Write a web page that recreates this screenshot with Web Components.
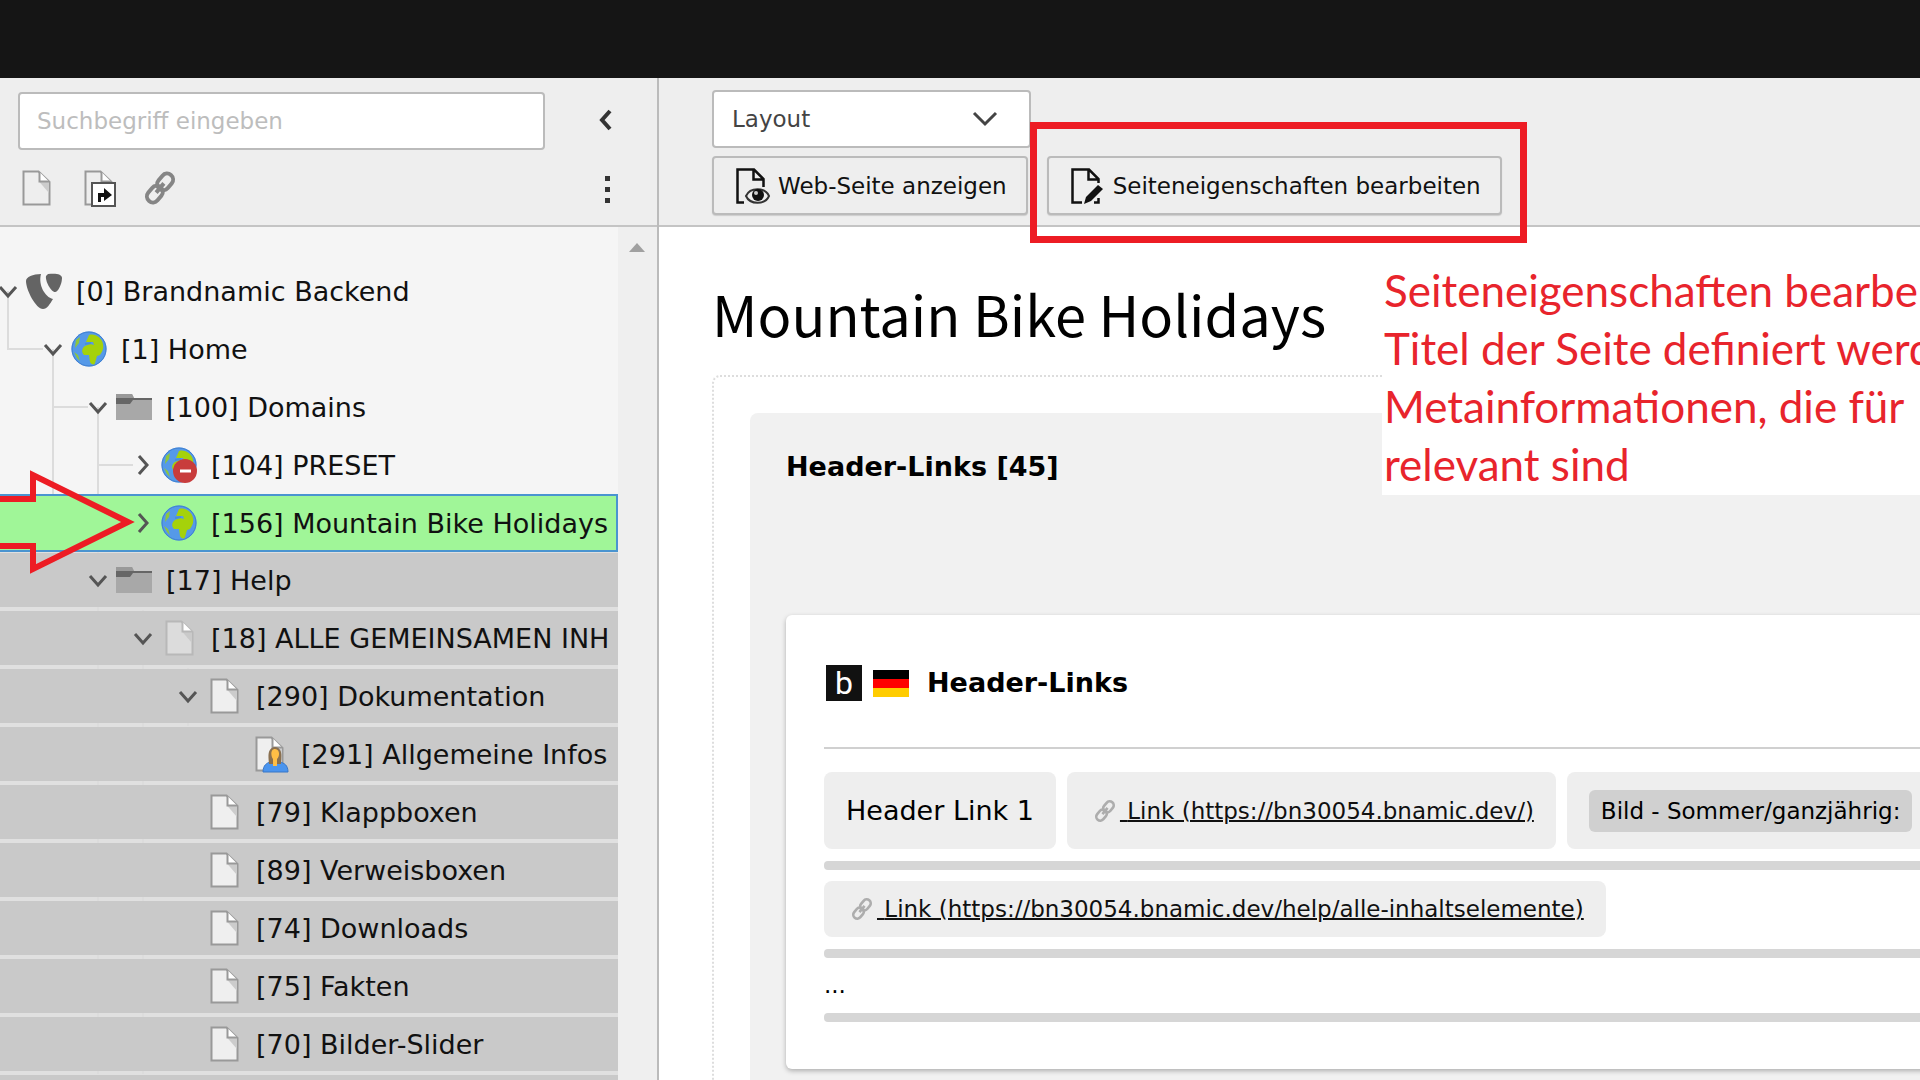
<!DOCTYPE html>
<html lang="de">
<head>
<meta charset="utf-8">
<title>Brandnamic Backend</title>
<style>
  html, body { margin: 0; height: 100%; }
  body { overflow: hidden; font-family: "DejaVu Sans", Verdana, sans-serif; font-size: 27px; color: #111; background: #fff; }
</style>
</head>
<body>
<backend-app></backend-app>
<script>
const page = (fill, stroke, fold) => `<path d="M5.500 1.500H20.500L31.500 12V34.500H5.500Z" fill="${fill}" stroke="${stroke}" stroke-width="2"/><path d="M21 11.500L31 23V12Z" fill="${fold}"/><path d="M21.500 2V11.500H31" fill="#fff" stroke="${stroke}" stroke-width="2"/>`;
const globe = `<circle cx="18" cy="18" r="17.500" fill="#5599e8"/><circle cx="18" cy="18" r="17" fill="none" stroke="#3f7fd0" stroke-width="1"/><path d="M18 4C24 2 31 7 32 13C33 18 31 21 29 24L26 25L24 32C23 35 20 33 19 31L18 24H13C10 21 11 17 14 15L19 13L23 14L22 11H15Z" fill="#a5d20a"/><path d="M5 9L9 6L8 12L4 17ZM3 21L7 24L9 30L6 27Z" fill="#8fc63c"/><path d="M14 13L20 12" stroke="#4a8fd8" stroke-width="2"/>`;
const chain = `<g fill="none" stroke-width="4" transform="rotate(-50 18 18)"><rect x="1" y="12" width="18" height="12" rx="6"/><rect x="17" y="12" width="18" height="12" rx="6"/><path d="M12 18H24"/></g>`;
const ICONS = {
  typo3: `<g fill="#646464"><path d="M15 1C12 12 19 24 27 26C24 31 21 36 17 36C10 36 0 17 0 8C0 4 7 1 15 1Z"/><path d="M22 1C30 0 36 1 36 5C36 11 32 19 29 19C25 19 19 8 20 3Z"/></g>`,
  globe,
  globeoff: globe + `<circle cx="24" cy="24" r="12" fill="#c83c3c"/><path d="M19 24H30" stroke="#fff" stroke-width="3"/>`,
  folder: `<path d="M0 5H16L18 9H36V31H0Z" fill="#a8a8a8"/><path d="M0 5H16L18 9H0Z" fill="#999"/><path d="M0 9H36V11H17L14 15H0Z" fill="#666"/>`,
  page: page("#efefef", "#999", "#ccc"),
  pagepale: page("#dcdcdc", "#b8b8b8", "#cacaca"),
  pageuser: page("#efefef", "#999", "#ccc") + `<path d="M12 36C12 29 16 27 19 26H29C33 27 37 29 37 36Z" fill="#4a94ee" stroke="#3776c8"/><path d="M24 11C15 12 18 23 18 28H30C30 23 33 12 24 11Z" fill="#8a7050"/><path d="M24 13C19 13 20 21 22 23V30H26V23C29 20 29 13 24 13Z" fill="#ffbe46"/>`,
  pagenew: page("#eee", "#999", "#ccc"),
  shortcut: page("#eee", "#999", "#ccc") + `<rect x="12" y="13" width="23" height="23" fill="#fff" stroke="#555" stroke-width="2"/><path d="M18 32V23H24V18L32 25L24 31V27H21V32Z" fill="#111"/>`,
  chain: `<g stroke="#858585">${chain}</g>`,
  chainpale: `<g stroke="#adadad">${chain}</g>`,
  view: `<path d="M12 34.500H5.500V1.500H22L31.500 11V19M21.500 2V11.500H31" fill="none" stroke="#111" stroke-width="2.500"/><path d="M14 28C18 19 33 19 37 28C33 37 18 37 14 28Z" fill="#eee" stroke="#333" stroke-width="2"/><circle cx="26" cy="27" r="6" fill="#111"/><circle cx="24" cy="25" r="2" fill="#ccc"/>`,
  edit: `<path d="M15 34.500H5.500V1.500H22L31.500 11V15M21.500 2V11.500H31M27 34.500H31.500V30" fill="none" stroke="#111" stroke-width="2.500"/><path d="M17 36L19 29L31 17L36 21L24 33Z" fill="#111"/>`
};

class Base extends HTMLElement {
  connectedCallback() {
    if (!this.shadowRoot) this.attachShadow({ mode: "open" }).innerHTML = this.render();
  }
}
const define = (name, render) => customElements.define(name, class extends Base { render() { return render(this); } });

define("ui-icon", el => `<style>:host{display:block;flex:none;width:36px;height:36px;white-space:normal}svg{display:block;width:100%;height:100%;overflow:visible}</style><svg viewBox="0 0 36 36" aria-hidden="true">${ICONS[el.getAttribute("name")]}</svg>`);

define("tree-row", el => {
  const level = +el.getAttribute("level");
  const state = el.getAttribute("state") || "";
  const open = el.getAttribute("toggle");
  const layers = [];
  for (const g of (el.getAttribute("guides") || "").split(" ").filter(Boolean)) {
    const [l, part] = g.split(":");
    const x = 7 + 45 * l;
    if (part === "end" || part === "tee") layers.push(`linear-gradient(#dcdcdc,#dcdcdc) ${x}px 28px/36px 2px no-repeat`);
    const size = part === "end" || part === "start" ? "50%" : "100%";
    layers.push(`linear-gradient(#dcdcdc,#dcdcdc) ${x}px ${part === "start" ? "100%" : "0"}/2px ${size} no-repeat`);
  }
  const arrow = open === "open" ? `<path d="M0 5L8 14L16 5"/>` : open === "closed" ? `<path d="M4 0L12 9L4 18"/>` : "";
  return `<style>
    :host{display:block}
    .outer{box-sizing:border-box;height:58px;background:${layers.length ? layers.join(",") + "," : ""}linear-gradient(${state === "dim" ? "#e0e0e0,#e0e0e0" : "transparent,transparent"})}
    .dim{padding:1px 0 3px}
    .row{display:flex;align-items:center;box-sizing:border-box;height:100%;padding-left:${45 * level}px;overflow:hidden;white-space:nowrap}
    .dim .row{background:#c9c9c9}
    .sel .row{background:#a0f698;border:2px solid #4a94d0;border-left:0}
    button{all:unset;flex:none;width:18px;height:18px;margin-right:8px}
    svg{display:block;overflow:visible;fill:none;stroke:#555;stroke-width:3}
    ui-icon{margin-right:14px}
    span{flex:none;padding-top:2px;line-height:32px}
  </style>
  <div class="outer ${state}"><div class="row">
    ${arrow ? `<button aria-label="Aufklappen"><svg width="18" height="18" viewBox="0 0 18 18">${arrow}</svg></button>` : `<svg width="26" height="18"></svg>`}
    ${el.hasAttribute("icon") ? `<ui-icon name="${el.getAttribute("icon")}"></ui-icon>` : ""}<span><slot></slot></span>
  </div></div>`;
});

define("tree-toolbar", () => `<style>
    :host{display:flex;flex-direction:column;gap:20px;box-sizing:border-box;height:149px;padding:14px 39px 0 18px;background:#eee;border-bottom:2px solid #c4c4c4}
    .line{display:flex;align-items:center;justify-content:space-between}
    input{box-sizing:border-box;width:527px;height:58px;border:2px solid #bbb;border-radius:4px;padding:0 17px;background:#fff;font:23px "DejaVu Sans",sans-serif;color:#333}
    input::placeholder{color:#bdbdbd;opacity:1}
    button{all:unset;display:block}
    .tools{display:flex;gap:26px}
    svg{display:block}
    .s{fill:none;stroke:#333;stroke-width:4}
  </style>
  <div class="line"><input type="search" aria-label="Suche" placeholder="Suchbegriff eingeben">
    <button aria-label="Einklappen"><svg class="s" width="20" height="24"><path d="M12 2L4 11L12 20"/></svg></button></div>
  <div class="line"><div class="tools">
    <button aria-label="Neue Seite"><ui-icon name="pagenew"></ui-icon></button>
    <button aria-label="Verweis"><ui-icon name="shortcut"></ui-icon></button>
    <button aria-label="Link"><ui-icon name="chain"></ui-icon></button></div>
    <button aria-label="Menü"><svg width="20" height="36" fill="#333"><path d="M7 6h5v5h-5zM7 17h5v5h-5zM7 28h5v5h-5z"/></svg></button></div>`);

define("page-tree", () => `<style>
    :host{display:flex;flex:1;min-height:0;background:#f5f5f5}
    .rows{flex:1;min-width:0;padding-top:35px}
    .scroll{flex:none;width:39px;background:#efefef}
    svg{display:block;margin:16px auto 0 11px}
  </style><div class="rows"><slot></slot></div>
  <div class="scroll"><svg width="16" height="9"><path d="M0 9L8 0L16 9Z" fill="#a0a0a0"/></svg></div>`);

define("tool-button", el => `<style>
    :host{display:block}
    button{display:flex;align-items:center;gap:10px;box-sizing:border-box;height:59px;padding:0 19px 0 18px;border:2px solid #bbb;border-radius:4px;background:#eee;color:#111;font:23px "DejaVu Sans",sans-serif;white-space:nowrap;box-shadow:0 1px 1px #ccc}
  </style><button><ui-icon name="${el.getAttribute("icon")}"></ui-icon><slot></slot></button>`);

define("doc-header", () => `<style>
    :host{display:flex;flex-direction:column;align-items:flex-start;gap:8px;box-sizing:border-box;height:149px;padding:12px 0 0 53px;background:#eee;border-bottom:2px solid #c4c4c4}
    .sel{display:grid;align-items:center;width:319px}
    select{grid-area:1/1;appearance:none;box-sizing:border-box;width:100%;height:58px;border:2px solid #bbb;border-radius:4px;padding:0 18px;background:#fff;font:23px "DejaVu Sans",sans-serif;color:#444}
    svg{grid-area:1/1;justify-self:end;margin-right:33px;fill:none;stroke:#444;stroke-width:3;pointer-events:none}
    .btns{display:flex;gap:19px}
  </style>
  <div class="sel"><select aria-label="Ansicht"><option>Layout</option></select><svg width="26" height="16"><path d="M2 2L13 13L24 2"/></svg></div>
  <div class="btns"><tool-button icon="view">Web-Seite anzeigen</tool-button><tool-button icon="edit">Seiteneigenschaften bearbeiten</tool-button></div>`);

define("data-chip", () => `<style>:host{display:flex;align-items:center;box-sizing:border-box;min-height:56px;padding:0 22px;border-radius:8px;background:#eee;white-space:nowrap}</style><slot></slot>`);
define("chip-link", () => `<style>
    :host{display:flex;align-items:center;gap:3px;font-size:23px;line-height:28px}
    ui-icon{width:24px;height:24px;margin-left:4px}
    a{color:#111;white-space:pre;text-decoration:underline;text-decoration-thickness:2px}
  </style><ui-icon name="chainpale"></ui-icon><a href="#"> <slot></slot></a>`);

define("content-card", () => `<style>
    :host{display:block;box-sizing:border-box;height:454px;padding:50px 38px 0;background:#fff;border-radius:6px;box-shadow:0 2px 5px rgba(0,0,0,.28)}
    header{display:flex;align-items:center;height:36px;padding:0 2px 46px;border-bottom:2px solid #d0d0d0;margin-bottom:23px}
    .logo{display:flex;align-items:center;justify-content:center;width:36px;height:36px;background:#111;color:#fff;font:32px/36px Roboto,sans-serif}
    .flag{width:36px;height:27px;margin:0 18px 0 11px;background:linear-gradient(#000 33%,#f00 33% 67%,#fc0 67%)}
    h3{margin:0;font-size:27px;line-height:32px}
    .chips{display:flex;gap:11px}
    .chips.tall data-chip{min-height:77px}
    hr{height:9px;margin:12px 0 11px;border:0;border-radius:4px;background:#d6d6d6}
    .tag{border-radius:6px;padding:0 12px;background:#d0d0d0;font-size:23px;line-height:42px}
    p{margin:0;font-size:23px;line-height:32px}
  </style>
  <header><span class="logo">b</span><span class="flag"></span><h3>Header-Links</h3></header>
  <div class="chips tall"><data-chip>Header Link 1</data-chip>
    <data-chip><chip-link>Link (https://bn30054.bnamic.dev/)</chip-link></data-chip>
    <data-chip><span class="tag">Bild - Sommer/ganzjährig:</span></data-chip></div>
  <hr>
  <div class="chips"><data-chip><chip-link>Link (https://bn30054.bnamic.dev/help/alle-inhaltselemente)</chip-link></data-chip></div>
  <hr><p>...</p><hr>`);

define("page-module", () => `<style>
    :host{display:block;padding:0 0 0 53px;overflow:hidden}
    h1{margin:46px 0 22px;font:400 56px/80px "Noto Sans CJK JP",sans-serif;color:#000;white-space:nowrap}
    .grid{margin-right:-120px;padding:36px;border:2px dotted #ddd;border-radius:8px}
    .col{height:800px;padding:38px 36px;border-radius:8px;background:#f1f1f1;color:#000}
    h2{margin:0 0 132px;font-size:27px;line-height:32px}
  </style>
  <h1>Mountain Bike Holidays</h1>
  <div class="grid"><div class="col"><h2>Header-Links [45]</h2><content-card></content-card></div></div>`);

define("callout-arrow", () => `<style>:host{position:absolute;left:0;top:468px}svg{display:block}</style>
  <svg width="136" height="108" fill="none" stroke="#ed1c24" stroke-width="6"><path d="M-10 31H33V7L128 54L33 101V78H-10"/></svg>`);
define("callout-frame", () => `<style>:host{position:absolute;left:1030px;top:122px;box-sizing:border-box;width:497px;height:121px;border:7px solid #ed1c24}</style>`);
define("callout-note", () => `<style>:host{position:absolute;left:1382px;right:0;top:261px;box-sizing:border-box;height:234px;padding-left:2px;overflow:hidden;background:#fff;color:#e8242c;font:44px/58px Lato,sans-serif;white-space:nowrap}</style><slot></slot>`);

define("backend-app", () => `<style>
    :host{display:flex;flex-direction:column;height:100vh;overflow:hidden;position:relative}
    .top{flex:none;height:78px;background:#151515}
    .body{display:flex;flex:1;min-height:0}
    nav{display:flex;flex-direction:column;flex:none;width:657px;border-right:2px solid #bbb}
    main{flex:1;min-width:0;overflow:hidden}
  </style>
  <div class="top"></div>
  <div class="body">
    <nav><tree-toolbar></tree-toolbar>
      <page-tree>
        <tree-row level="0" toggle="open" icon="typo3" guides="0:start">[0] Brandnamic Backend</tree-row>
        <tree-row level="1" toggle="open" icon="globe" guides="0:end 1:start">[1] Home</tree-row>
        <tree-row level="2" toggle="open" icon="folder" guides="1:tee 2:start">[100] Domains</tree-row>
        <tree-row level="3" toggle="closed" icon="globeoff" guides="1:line 2:tee">[104] PRESET</tree-row>
        <tree-row level="3" toggle="closed" icon="globe" state="sel">[156] Mountain Bike Holidays</tree-row>
        <tree-row level="2" toggle="open" icon="folder" state="dim" guides="2:line">[17] Help</tree-row>
        <tree-row level="3" toggle="open" icon="pagepale" state="dim" guides="2:line 3:line">[18] ALLE GEMEINSAMEN INH</tree-row>
        <tree-row level="4" toggle="open" icon="page" state="dim" guides="2:line 3:line 4:line">[290] Dokumentation</tree-row>
        <tree-row level="5" icon="pageuser" state="dim" guides="2:line 3:line">[291] Allgemeine Infos</tree-row>
        <tree-row level="4" icon="page" state="dim" guides="2:line 3:line">[79] Klappboxen</tree-row>
        <tree-row level="4" icon="page" state="dim" guides="2:line 3:line">[89] Verweisboxen</tree-row>
        <tree-row level="4" icon="page" state="dim" guides="2:line 3:line">[74] Downloads</tree-row>
        <tree-row level="4" icon="page" state="dim" guides="2:line 3:line">[75] Fakten</tree-row>
        <tree-row level="4" icon="page" state="dim" guides="2:line 3:line">[70] Bilder-Slider</tree-row>
        <tree-row level="4" state="dim"></tree-row>
      </page-tree></nav>
    <main><doc-header></doc-header><page-module></page-module></main>
  </div>
  <callout-arrow></callout-arrow>
  <callout-frame></callout-frame>
  <callout-note>Seiteneigenschaften bearbe<br>Titel der Seite definiert werd<br>Metainformationen, die für<br>relevant sind</callout-note>`);
</script>
</body>
</html>
